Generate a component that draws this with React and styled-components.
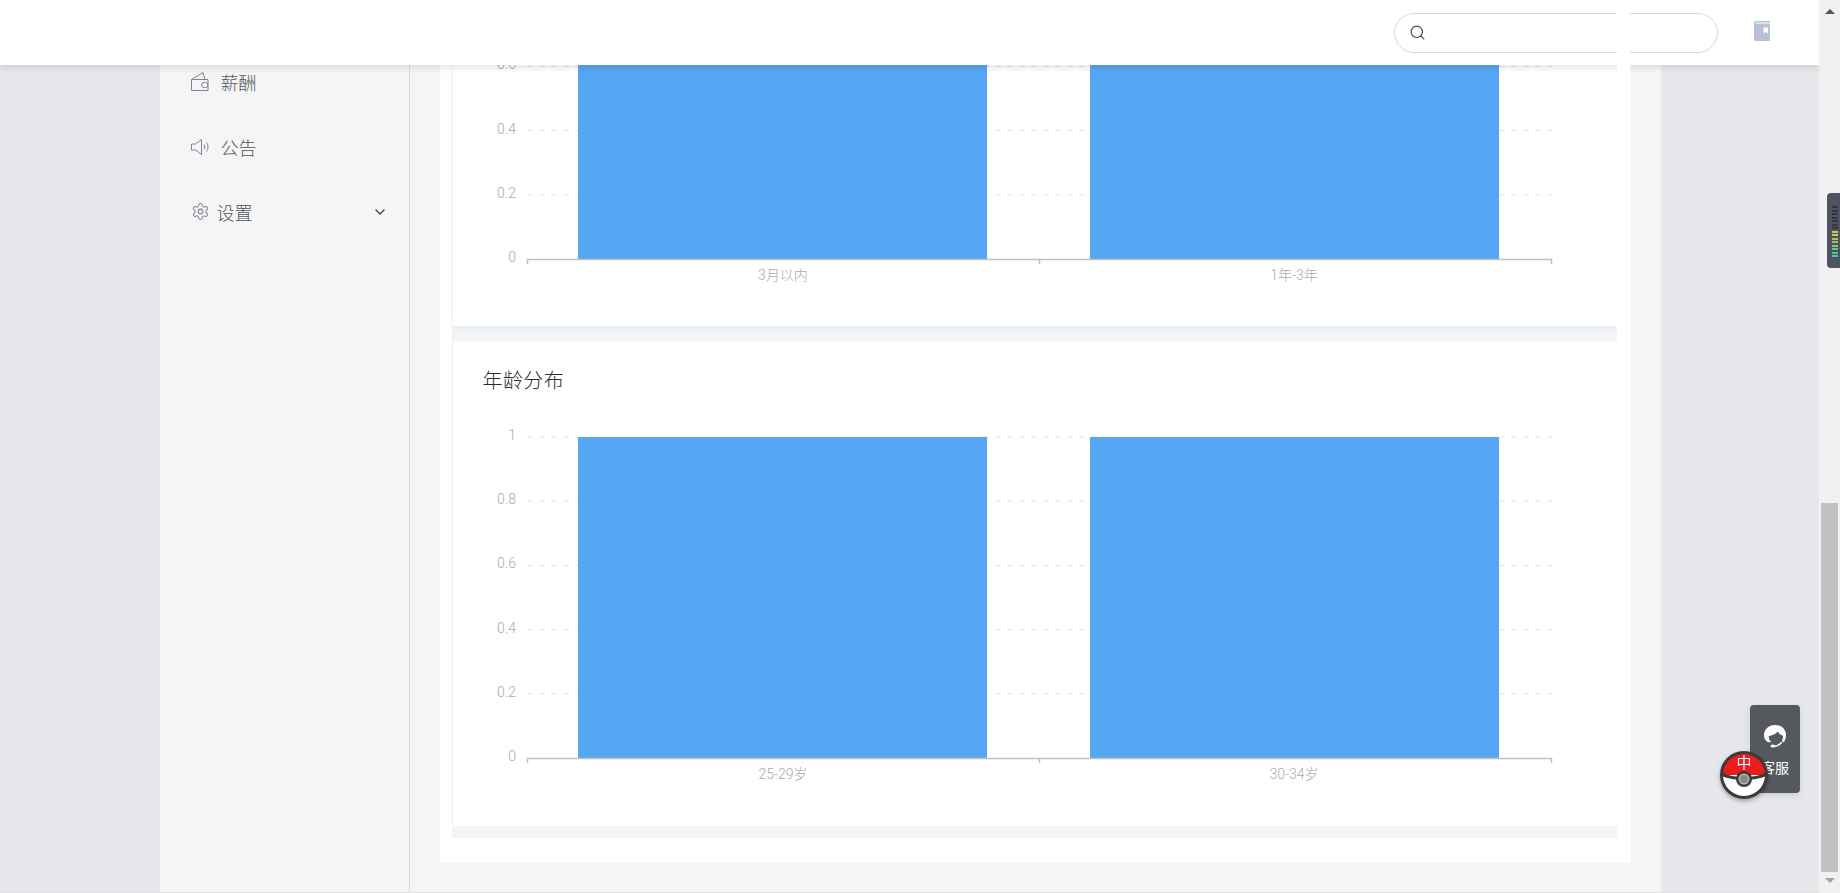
import React from "react";
import styled, { createGlobalStyle } from "styled-components";
import { ChevronDown, Search } from "lucide-react";

const FONT = `"Roboto", "Noto Sans CJK SC", sans-serif`;

const GlobalStyle = createGlobalStyle`
  html, body {
    margin: 0;
    height: 100%;
    overflow: hidden;
    background: #e6e7eb;
    font-family: ${FONT};
  }
`;

const Window = styled.div`
  position: relative;
  display: flex;
  width: 1840px;
  height: 893px;
  overflow: hidden;
`;

const Page = styled.div`
  position: relative;
  flex: 1;
  display: flex;
  justify-content: center;
  padding: 0 159px 0 160px;
  background: #e6e7eb;
  border-bottom: 1px solid #e0e0e0;
  overflow: hidden;
`;

const Header = styled.header`
  position: absolute;
  top: 0;
  left: 0;
  right: 0;
  z-index: 5;
  height: 65px;
  display: flex;
  align-items: center;
  justify-content: flex-end;
  gap: 36px;
  padding-right: 49px;
  background: #fff;
  box-shadow: 0 2px 8px rgba(0, 0, 0, 0.12);
`;

const SearchBox = styled.div`
  box-sizing: border-box;
  width: 324px;
  height: 40px;
  display: flex;
  align-items: center;
  padding-left: 14px;
  border: 1px solid #d9d9d9;
  border-radius: 20px;
  color: #444;
`;

const BookWrap = styled.div`
  display: flex;
  margin-top: -3px;
`;

const Sidebar = styled.nav`
  box-sizing: border-box;
  width: 250px;
  flex-shrink: 0;
  padding: 49px 21px 0 31px;
  background: #f4f5f7;
  border-right: 1px solid #d8d9dc;
`;

const NavItem = styled.div`
  height: 65px;
  display: flex;
  align-items: center;
  gap: ${(p) => p.$gap || 12}px;
  font-size: 18px;
  font-weight: 300;
  color: #555;
  svg.nav-icon {
    flex-shrink: 0;
    color: #7f848a;
  }
`;

const NavArrow = styled.span`
  margin-left: auto;
  display: flex;
  color: #444;
`;

const Main = styled.main`
  flex: 1;
  padding: 0 30px 30px;
  background: #f4f5f7;
`;

const Panel = styled.div`
  box-sizing: border-box;
  height: 863px;
  padding: 0 13px 25px 12px;
  background: #fff;
`;

// the panel's right edge paints above the fixed header in the original
const PanelEdge = styled.div`
  position: absolute;
  top: 0;
  left: 1617px;
  z-index: 6;
  width: 13px;
  height: 863px;
  background: #fff;
`;

const CardStack = styled.div`
  display: flex;
  flex-direction: column;
  gap: 15px;
  height: 100%;
  background: #f3f6f9;
`;

const Card = styled.section`
  box-sizing: border-box;
  height: ${(p) => p.$height}px;
  padding-left: 1px;
  background: #fff;
  border-left: 1px solid #eef0f3;
  border-radius: 0 0 2px 2px;
  box-shadow: ${(p) => (p.$raised ? "0 4px 10px rgba(120, 140, 170, 0.08)" : "none")};
`;

const CardTitle = styled.h3`
  margin: 0;
  height: 78px;
  padding: 22px 0 0 29px;
  box-sizing: border-box;
  font-size: 20px;
  letter-spacing: 0.4px;
  line-height: 36px;
  font-weight: 300;
  color: #2a2a2a;
`;

const ChartSvg = styled.svg`
  display: block;
  text {
    font-family: ${FONT};
    font-size: 14px;
    font-weight: 300;
    fill: #aaa;
  }
`;

const Scrollbar = styled.div`
  width: 21px;
  flex-shrink: 0;
  display: flex;
  flex-direction: column;
  align-items: center;
  background: #f1f1f1;
`;

const ScrollArrow = styled.div`
  width: 0;
  height: 0;
  margin: ${(p) => (p.$down ? "6px 0 0" : "9px 0 0")};
  border-left: 5px solid transparent;
  border-right: 5px solid transparent;
  border-${(p) => (p.$down ? "top" : "bottom")}: 5px solid #555;
  ${(p) => p.$down && "border-top-color: #a3a3a3;"}
`;

const ScrollThumb = styled.div`
  width: 17px;
  height: 369px;
  margin-top: auto;
  background: #c1c1c1;
`;

const ScrollEnd = styled.div`
  height: 10px;
`;

const Meter = styled.div`
  position: absolute;
  top: 193px;
  right: 0;
  z-index: 7;
  box-sizing: border-box;
  width: 13px;
  height: 75px;
  padding: 13px 0 0 5px;
  display: flex;
  flex-direction: column;
  gap: 1.5px;
  background: #50535f;
  border-radius: 4px 0 0 4px;
`;

const MeterBar = styled.i`
  display: block;
  width: 6px;
  height: 2px;
  background: ${(p) => p.$color};
`;

const ServiceBox = styled.div`
  position: absolute;
  left: 1750px;
  top: 705px;
  z-index: 7;
  box-sizing: border-box;
  width: 50px;
  height: 88px;
  display: flex;
  flex-direction: column;
  align-items: center;
  padding-top: 20px;
  gap: 9px;
  background: #55585e;
  border-radius: 4px;
  box-shadow: 0 2px 6px rgba(0, 0, 0, 0.1);
  color: #fff;
  font-size: 14px;
  line-height: 20px;
`;

const Ball = styled.svg`
  position: absolute;
  left: 1720px;
  top: 750px;
  z-index: 8;
  filter: drop-shadow(0 2px 2px rgba(0, 0, 0, 0.3));
  text {
    font-family: "Noto Sans CJK SC", sans-serif;
    font-size: 15px;
    fill: #fff;
  }
`;

const ROWS = [0, 0.2, 0.4, 0.6, 0.8, 1];

function Chart({ height, axisY, labels }) {
  const step = 64.2;
  const bars = [
    [578, 987],
    [1090, 1499],
  ];
  const offsetX = 454;
  const rowY = (i) => axisY - step * i;
  const top = Math.max(rowY(5), 0);
  return (
    <ChartSvg width="1164" height={height}>
      {ROWS.slice(1).map((v, i) => (
        <line
          key={v}
          x1={527 - offsetX}
          x2={1552 - offsetX}
          y1={rowY(i + 1)}
          y2={rowY(i + 1)}
          stroke="#e6e6e6"
          strokeDasharray="6 6"
        />
      ))}
      {bars.map(([a, b]) => (
        <rect key={a} x={a - offsetX} y={top} width={b - a} height={axisY - top} fill="#55a6f3" />
      ))}
      <path
        d={`M${527.5 - offsetX} ${axisY + 5}V${axisY}.5H${1551.5 - offsetX}V${axisY + 5}M${1039.5 - offsetX} ${axisY}V${axisY + 5}`}
        fill="none"
        stroke="#c0c0c0"
        strokeWidth="1.5"
      />
      {ROWS.map((v, i) =>
        rowY(i) > 10 ? (
          <text key={v} x={516 - offsetX} y={rowY(i) + 3} textAnchor="end">
            {v}
          </text>
        ) : null
      )}
      {labels.map((l, i) => (
        <text key={l} x={[783, 1294][i] - offsetX} y={axisY + 20.5} textAnchor="middle">
          {l}
        </text>
      ))}
    </ChartSvg>
  );
}

const WalletIcon = () => (
  <svg className="nav-icon" width="18" height="21" viewBox="0 0 18 21" fill="none" stroke="currentColor" strokeWidth="1">
    <path d="M.5 8.500h16.500v11H.5zM.5 8.500 12 1.500l2 7" />
    <rect x="10.500" y="11.500" width="6.500" height="5" rx="2.500" />
  </svg>
);

const SpeakerIcon = () => (
  <svg className="nav-icon" width="18" height="18" viewBox="0 0 18 18" fill="none" stroke="currentColor" strokeWidth="1">
    <path d="M.5 6h4l6-4.500v15l-6-4.500h-4zM13 6.500c1 1.500 1 3.500 0 5M15.500 4.500c2 2.500 2 6.500 0 9" />
  </svg>
);

const GearIcon = () => (
  <svg className="nav-icon" width="19" height="19" viewBox="0 0 24 24" fill="none" stroke="currentColor" strokeWidth="1.300">
    <path d="M12.220 2h-.440a2 2 0 0 0-2 2v.180a2 2 0 0 1-1 1.730l-.430.250a2 2 0 0 1-2 0l-.150-.080a2 2 0 0 0-2.730.730l-.220.380a2 2 0 0 0 .730 2.730l.150.100a2 2 0 0 1 1 1.720v.510a2 2 0 0 1-1 1.740l-.150.090a2 2 0 0 0-.730 2.730l.220.380a2 2 0 0 0 2.730.730l.150-.080a2 2 0 0 1 2 0l.430.250a2 2 0 0 1 1 1.730V20a2 2 0 0 0 2 2h.440a2 2 0 0 0 2-2v-.180a2 2 0 0 1 1-1.730l.430-.250a2 2 0 0 1 2 0l.150.080a2 2 0 0 0 2.730-.730l.220-.390a2 2 0 0 0-.730-2.730l-.150-.080a2 2 0 0 1-1-1.740v-.500a2 2 0 0 1 1-1.740l.150-.090a2 2 0 0 0 .730-2.730l-.220-.380a2 2 0 0 0-2.730-.730l-.150.080a2 2 0 0 1-2 0l-.430-.250a2 2 0 0 1-1-1.730V4a2 2 0 0 0-2-2z" />
    <circle cx="12" cy="12" r="3" />
  </svg>
);

const BookIcon = () => (
  <svg width="16" height="20" viewBox="0 0 16 20">
    <path d="M2 0h14v1.500H2.500C1.800 1.500 1.500 2 1.500 2.500h14.500V20H2a2 2 0 0 1-2-2V2a2 2 0 0 1 2-2z" fill="#b9c1d5" />
    <path d="M9.500 6.500h4.500v6l-2.250-1.500-2.250 1.500z" fill="#fff" />
  </svg>
);

const HeadsetIcon = () => (
  <svg width="24" height="24" viewBox="0 0 24 24">
    <path
      d="M12 0C5.500 0 1 4.500 1 10.500c0 3 1.500 5.500 4 6.500 1 .4 2.200.4 3.200 0C6.500 15.500 5.700 13.500 5.700 11c3.500-.5 7-2 9-4.500 1 2 2.800 3.500 5.300 4.200 0 1.800-.3 3.800-1.200 5.300l2 1.200c1.300-2 2.200-4.300 2.200-7.200C23 4.500 18.500 0 12 0z"
      fill="#fff"
    />
    <path d="M8 20.500c3 1.500 7 1 10.800-3.200" fill="none" stroke="#fff" strokeWidth="1.500" />
    <ellipse cx="10" cy="21" rx="2.500" ry="1.600" fill="#fff" />
  </svg>
);

const PokeBall = () => (
  <Ball width="49" height="50" viewBox="0 0 49 50">
    <circle cx="24" cy="25" r="23" fill="#fff" />
    <path d="M1.500 25a22.500 22.500 0 0 1 45 0z" fill="#ee1c1c" />
    <path d="M2 24.500c7 3 13 4 22 4s15-1 22-4" fill="none" stroke="#3a3a3a" strokeWidth="3" />
    <circle cx="24" cy="25" r="22.500" fill="none" stroke="#3b3b3b" strokeWidth="3" />
    <circle cx="24" cy="29" r="8" fill="#3b3b3b" />
    <circle cx="24" cy="29" r="5.500" fill="#b5b5b5" />
    <circle cx="24" cy="29" r="4" fill="#8a8a8a" />
    <text x="24" y="18" textAnchor="middle">中</text>
  </Ball>
);

const METER = [
  "#333640", "#333640", "#333640", "#333640", "#333640", "#333640", "#333640",
  "#c9c94e", "#c2c852", "#aec456", "#9ac35e", "#84c26c", "#66c683", "#48ca9a", "#3dd0ae",
];

export default function App() {
  return (
    <Window>
      <GlobalStyle />
      <Page>
        <Header>
          <SearchBox>
            <Search size={17} strokeWidth={1.6} />
          </SearchBox>
          <BookWrap>
            <BookIcon />
          </BookWrap>
        </Header>
        <Sidebar>
          <NavItem $gap={12}>
            <WalletIcon />
            薪酬
          </NavItem>
          <NavItem $gap={12}>
            <SpeakerIcon />
            公告
          </NavItem>
          <NavItem $gap={7}>
            <GearIcon />
            设置
            <NavArrow>
              <ChevronDown size={16} strokeWidth={2} />
            </NavArrow>
          </NavItem>
        </Sidebar>
        <Main>
          <Panel>
            <CardStack>
              <Card $height={326} $raised>
                <Chart height={326} axisY={259} labels={["3月以内", "1年-3年"]} />
              </Card>
              <Card $height={485}>
                <CardTitle>年龄分布</CardTitle>
                <Chart height={407} axisY={339} labels={["25-29岁", "30-34岁"]} />
              </Card>
            </CardStack>
          </Panel>
        </Main>
        <PanelEdge />
        <ServiceBox>
          <HeadsetIcon />
          客服
        </ServiceBox>
        <PokeBall />
      </Page>
      <Scrollbar>
        <ScrollArrow />
        <ScrollThumb />
        <ScrollArrow $down />
        <ScrollEnd />
      </Scrollbar>
      <Meter>
        {METER.map((c, i) => (
          <MeterBar key={i} $color={c} />
        ))}
      </Meter>
    </Window>
  );
}
